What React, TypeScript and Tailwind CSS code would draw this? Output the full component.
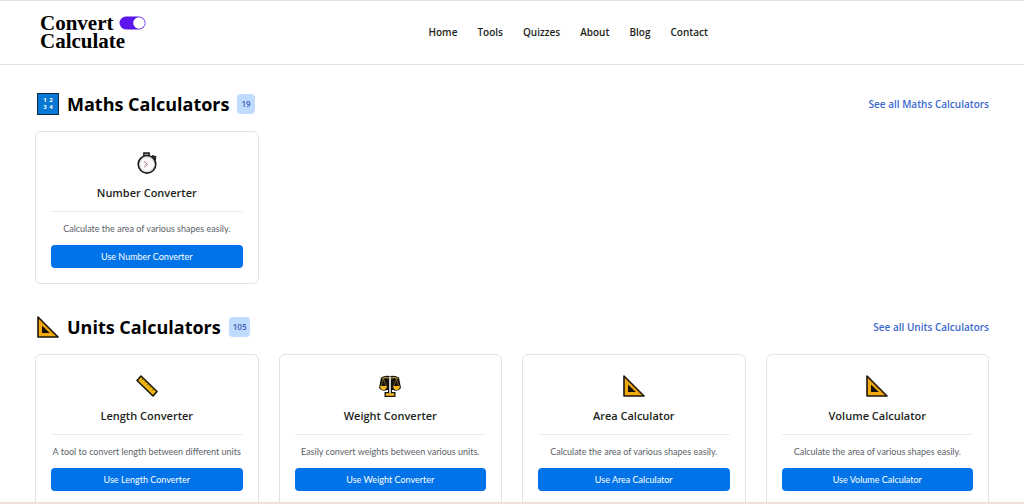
import type { ReactNode } from "react";

type Tool = {
  name: string;
  copy: string;
  icon: ReactNode;
};

type Category = {
  title: string;
  count: number;
  icon: ReactNode;
  tools: Tool[];
};

function SetSquare() {
  return (
    <svg width="22" height="22" viewBox="0 0 22 22" aria-hidden="true" className="shrink-0">
      <path d="M1 1 L21 21 H1 Z" fill="#f2a90f" stroke="#1c160a" strokeWidth="1.6" strokeLinejoin="round" />
      <path d="M5 9.5 L12.8 17 H5 Z" fill="#120e08" />
      <path d="M6.5 6.5l-1.2 1.2M9 9l-1.2 1.2M11.5 11.5l-1.2 1.2M14 14l-1.2 1.2M16.5 16.5l-1.2 1.2" stroke="#8a5a08" strokeWidth="0.6" />
    </svg>
  );
}

function Ruler() {
  return (
    <svg width="22" height="22" viewBox="0 0 22 22" aria-hidden="true">
      <path d="M5 1 L21 16.5 L17 21 L1 5.5 Z" fill="#eeb60e" stroke="#1c160a" strokeWidth="1.6" strokeLinejoin="round" />
      <path d="M7.3 3.6l-1.6 1.7M10 6.2L8.8 7.5M12.6 8.7L11 10.4M15.2 11.2L14 12.5M17.8 13.7l-1.6 1.7" stroke="#4f3605" strokeWidth="0.9" />
    </svg>
  );
}

function Scales() {
  return (
    <svg width="22" height="22" viewBox="0 0 22 22" aria-hidden="true">
      <path d="M2 2.5 Q6 0 11 1 Q16 0 20 2.5 L22 13 Q19 17 14 15 H8 Q3 17 0 13 Z" fill="#15120e" />
      <path d="M4.5 4 L1.8 11.5 M4.5 4 L7.4 11.5 M17.5 4 L14.6 11.5 M17.5 4 L20.2 11.5" stroke="#a8842f" strokeWidth="0.6" />
      <path d="M3 3.4 Q7 1.8 11 3.2 Q15 1.8 19 3.4" stroke="#e0b64a" strokeWidth="1" fill="none" />
      <path d="M1 11 H8 Q7.5 15 4.5 15 T1 11 Z M14 11 H21 Q20.5 15 17.5 15 T14 11 Z" fill="#f5b820" />
      <path d="M9 13 V17 H5.5 V22 H16.5 V17 H13 V13 Z" fill="#15120e" />
      <path d="M10 1.5 H12 V18 H10 Z" fill="#c8ccd0" />
      <path d="M6.8 18.2 H15.2 V20.8 H6.8 Z" fill="#f5b820" />
    </svg>
  );
}

function Stopwatch() {
  return (
    <svg width="22" height="22" viewBox="0 0 22 22" aria-hidden="true">
      <path d="M7.8 1 H13.2 V4 H7.8 Z" fill="#a5a5a5" stroke="#1b1b1b" strokeWidth="1.3" />
      <path d="M16 4 L19.3 5 L19 8" fill="none" stroke="#1b1b1b" strokeWidth="2" />
      <circle cx="11" cy="12.3" r="8.8" fill="#e3e3e3" stroke="#1b1b1b" strokeWidth="1.6" />
      <circle cx="11" cy="12.3" r="6.6" fill="#faf8f9" />
      <path d="M8.3 9.5 L11.4 12.5 L8.3 15" fill="none" stroke="#a8607c" strokeWidth="1" />
    </svg>
  );
}

function NumberTile() {
  return (
    <span
      aria-hidden="true"
      className="grid size-[22px] shrink-0 grid-cols-2 place-content-center justify-items-center border border-[#10263d] bg-[#0878d4] px-1 text-[6px] leading-[7px] font-bold text-white"
    >
      <span>1</span>
      <span>2</span>
      <span>3</span>
      <span>4</span>
    </span>
  );
}

const links = ["Home", "Tools", "Quizzes", "About", "Blog", "Contact"];

const areaCopy = "Calculate the area of various shapes easily.";

const categories: Category[] = [
  {
    title: "Maths Calculators",
    count: 19,
    icon: <NumberTile />,
    tools: [{ name: "Number Converter", copy: areaCopy, icon: <Stopwatch /> }],
  },
  {
    title: "Units Calculators",
    count: 105,
    icon: <SetSquare />,
    tools: [
      { name: "Length Converter", copy: "A tool to convert length between different units", icon: <Ruler /> },
      { name: "Weight Converter", copy: "Easily convert weights between various units.", icon: <Scales /> },
      { name: "Area Calculator", copy: areaCopy, icon: <SetSquare /> },
      { name: "Volume Calculator", copy: areaCopy, icon: <SetSquare /> },
    ],
  },
];

function Logo() {
  return (
    <a href="#" className="pb-0.5 font-['Liberation_Serif',serif] text-[21px] leading-[18px] font-bold text-black">
      <span className="flex items-center gap-1.5">
        Convert
        <svg width="27" height="14" viewBox="0 0 27 14" aria-hidden="true">
          <rect x="0.5" y="0.5" width="26" height="13" rx="6.5" fill="#5b17eb" />
          <circle cx="20" cy="7" r="5.8" fill="#fff" />
        </svg>
      </span>
      <span className="block">Calculate</span>
    </a>
  );
}

function ToolCard({ tool }: { tool: Tool }) {
  return (
    <article className="rounded-md border border-[#e2e3e5] bg-white p-[15px] text-center">
      <div className="flex h-8 items-center justify-center">{tool.icon}</div>
      <h3 className="mt-1 text-[11px] leading-5 font-semibold text-[#1d1f21]">{tool.name}</h3>
      <hr className="mt-2 border-[#ebecee]" />
      <p className="mt-2 font-['Lato',sans-serif] text-[9px] leading-[17px] whitespace-nowrap text-[#5c6268]">
        {tool.copy}
      </p>
      <button
        type="button"
        className="mt-2 block h-[23px] w-full rounded bg-[#0073e9] font-['Lato',sans-serif] text-[9px] text-white"
      >
        Use {tool.name}
      </button>
    </article>
  );
}

export default function App() {
  return (
    <div className="bg-white font-['Open_Sans','Noto_Sans',sans-serif]">
      <header className="grid h-[65px] grid-cols-[7fr_auto_5fr] items-center border-t border-b border-[#dfe1e3] px-10">
        <Logo />
        <nav className="flex gap-5 pl-0.5 text-[10px] font-semibold text-[#1d1f21]">
          {links.map((link) => (
            <a key={link} href="#">
              {link}
            </a>
          ))}
        </nav>
      </header>

      <main className="px-[35px] pt-[27px]">
        {categories.map((cat) => (
          <section key={cat.title} className="pb-[31px]">
            <div className="flex h-6 items-center">
              <span className="pl-0.5">{cat.icon}</span>
              <h2 className="ml-2 text-[18px] leading-6 font-bold text-black">{cat.title}</h2>
              <span className="ml-2 rounded-sm bg-[#bfdbfe] px-1 text-[8px] leading-5 font-semibold text-[#3b5bb5]">
                {cat.count}
              </span>
              <a href="#" className="ml-auto text-[10px] font-semibold text-[#3b69d0]">
                See all {cat.title}
              </a>
            </div>
            <div className="mt-[15px] grid grid-cols-4 gap-5">
              {cat.tools.map((tool) => (
                <ToolCard key={tool.name} tool={tool} />
              ))}
            </div>
          </section>
        ))}
      </main>

      {/* Thin strip pinned along the bottom edge of the window */}
      <div className="fixed inset-x-0 bottom-0 h-0.5 bg-[#eee2da]" />
    </div>
  );
}
